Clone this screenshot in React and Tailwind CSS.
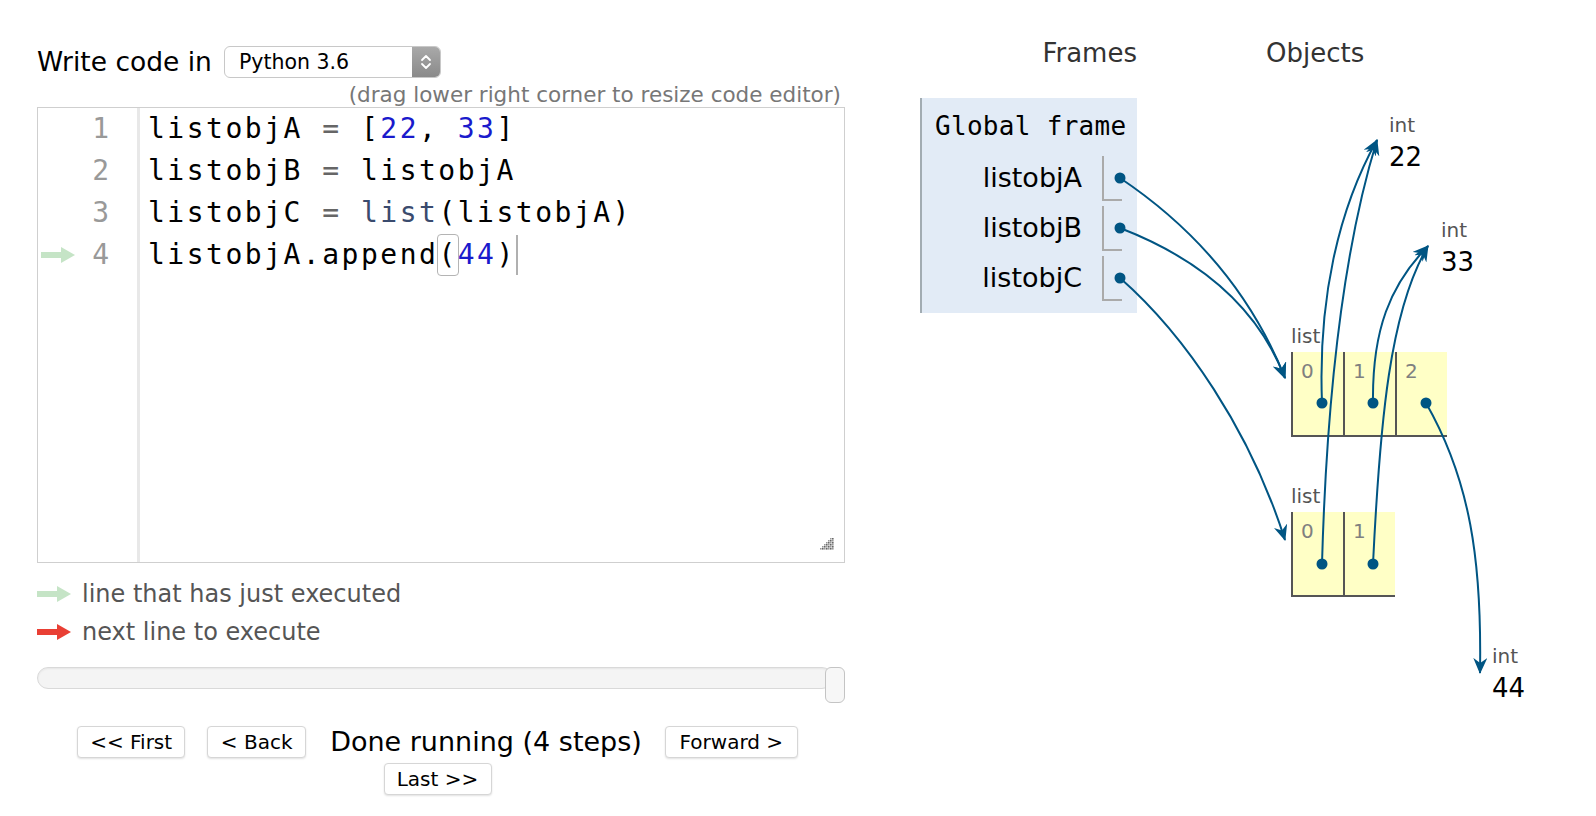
import React from 'react'

const BLUE = '#005583'

// connectors between frame vars / list cells and heap objects (page coords)
const links = [
  'M1120 178 C1190 225 1250 290 1285 378',
  'M1120 228 C1190 255 1255 300 1285 378',
  'M1120 278 C1185 335 1250 430 1285 540',
  'M1322 403 C1318 300 1338 210 1377 140',
  'M1322 564 C1326 420 1340 260 1377 140',
  'M1373 403 C1372 330 1390 285 1428 246',
  'M1373 564 C1380 420 1390 310 1428 246',
  'M1426 403 C1470 480 1482 560 1480 673',
]

const dots = [
  [1120, 178], [1120, 228], [1120, 278],
  [1322, 403], [1373, 403], [1426, 403],
  [1322, 564], [1373, 564],
]

function LineArrow({ color }) {
  return (
    <svg width="34" height="16" viewBox="0 0 34 16" className="shrink-0">
      <path d="M0 5h20V0l14 8-14 8v-5H0z" fill={color} />
    </svg>
  )
}

function Num({ children }) {
  return <span className="text-[#1a1acc]">{children}</span>
}

function Op({ children }) {
  return <span className="text-[#666]">{children}</span>
}

function Btn({ children, w }) {
  return (
    <div className={`${w} h-[32px] shrink-0 flex items-center justify-center bg-white border border-[#d6d6d6] rounded-[4px] shadow-[0_1px_2px_rgba(0,0,0,0.12)] text-[20px] text-black`}>
      {children}
    </div>
  )
}

function IntObj({ pos, value }) {
  return (
    <div className={`absolute ${pos}`}>
      <div className="text-[20px] leading-[20px] text-[#555]">int</div>
      <div className="mt-[9px] text-[26px] leading-[26px] text-black">{value}</div>
    </div>
  )
}

function ListObj({ pos, n }) {
  const cells = Array.from({ length: n }, (_, i) => i)
  return (
    <div className={`absolute ${pos}`}>
      <div className="text-[20px] leading-[20px] text-[#555]">list</div>
      <div className="mt-[6px] flex">
        {cells.map((i) => (
          <div
            key={i}
            className="w-[52px] h-[85px] bg-[#ffffc6] border-l-2 border-b-2 border-[#555] pl-[8px] pt-[9px] text-[20px] leading-[20px] text-[#808080]"
          >
            {i}
          </div>
        ))}
      </div>
    </div>
  )
}

export default function App() {
  const lineNums = [1, 2, 3, 4]
  return (
    <div className="relative w-[1596px] h-[816px] bg-white overflow-hidden font-['DejaVu_Sans',sans-serif]">
      <div className="flex">
        {/* code panel */}
        <div className="ml-[37px] w-[808px] shrink-0 pt-[46px]">
          <div className="flex items-center h-[32px]">
            <span className="text-[26.5px] leading-[32px] text-black">Write code in</span>
            <div className="ml-[12px] w-[217px] h-[32px] flex rounded-[6px] border border-[#c8c8c8] bg-white overflow-hidden">
              <div className="flex-1 pl-[14px] flex items-center text-[20.5px] text-black">Python 3.6</div>
              <div className="w-[28px] bg-gradient-to-b from-[#a9a9a9] to-[#8a8a8a] flex items-center justify-center">
                <svg width="12" height="20" viewBox="0 0 12 20">
                  <path d="M2 8l4-4 4 4M2 12l4 4 4-4" stroke="white" strokeWidth="1.8" fill="none" strokeLinecap="round" strokeLinejoin="round" />
                </svg>
              </div>
            </div>
          </div>
          <div className="mt-[5px] h-[24px] text-right pr-[4px] text-[21.5px] leading-[24px] text-[#777]">
            (drag lower right corner to resize code editor)
          </div>

          {/* editor */}
          <div className="relative h-[456px] border border-[#cfcfcf] flex bg-white">
            <div className="w-[102px] shrink-0 border-r-[3px] border-[#e8e8e8] font-['DejaVu_Sans_Mono',monospace] text-[28px] text-[#999]">
              {lineNums.map((n) => (
                <div key={n} className="h-[42px] flex items-center pl-[3px] pr-[28px]">
                  {n === 4 && <LineArrow color="#c5e4c6" />}
                  <span className="ml-auto leading-[42px]">{n}</span>
                </div>
              ))}
            </div>
            <div className="pl-[8px] font-['DejaVu_Sans_Mono',monospace] text-[28px] tracking-[2.5px] text-black whitespace-pre">
              <div className="h-[42px] leading-[42px]">listobjA <Op>=</Op> [<Num>22</Num>, <Num>33</Num>]</div>
              <div className="h-[42px] leading-[42px]">listobjB <Op>=</Op> listobjA</div>
              <div className="h-[42px] leading-[42px]">listobjC <Op>=</Op> <span className="text-[#3a4b6e]">list</span>(listobjA)</div>
              <div className="h-[42px] leading-[42px] flex items-center">
                <span>listobjA.append</span>
                <span className="inline-block h-[40px] leading-[40px] outline outline-1 outline-[#b4b4b4] rounded-[3px]">(</span>
                <Num>44</Num>
                <span>)</span>
                <span className="inline-block w-[2px] h-[40px] bg-[#b0b0b0]" />
              </div>
            </div>
            <svg width="14" height="14" viewBox="0 0 14 14" className="absolute right-[10px] bottom-[10px]">
              {[
                [10, 0], [12, 0], [8, 2], [10, 2], [12, 2], [6, 4], [8, 4], [10, 4], [12, 4],
                [4, 6], [6, 6], [8, 6], [10, 6], [12, 6], [2, 8], [4, 8], [6, 8], [8, 8], [10, 8], [12, 8],
                [0, 10], [2, 10], [4, 10], [6, 10], [8, 10], [10, 10], [12, 10],
              ].map(([x, y], i) => (
                <rect key={i} x={x} y={y} width="1.6" height="1.6" fill={(x + y) % 4 === 0 ? '#666' : '#999'} />
              ))}
            </svg>
          </div>

          {/* legend */}
          <div className="mt-[12px] h-[38px] flex items-center gap-[11px] text-[24px] text-[#555]">
            <LineArrow color="#c5e4c6" />
            <span>line that has just executed</span>
          </div>
          <div className="h-[38px] flex items-center gap-[11px] text-[24px] text-[#555]">
            <LineArrow color="#e93f34" />
            <span>next line to execute</span>
          </div>

          {/* step slider */}
          <div className="relative mt-[16px] h-[36px]">
            <div className="mt-[6px] h-[22px] w-[796px] rounded-full border border-[#d9d9d9] bg-[#f4f4f4] shadow-[inset_0_1px_2px_rgba(0,0,0,0.06)]" />
            <div className="absolute right-0 top-0 w-[20px] h-[36px] rounded-[6px] border border-[#c4c4c4] bg-[#f7f7f7]" />
          </div>

          {/* nav buttons */}
          <div className="mt-[23px] h-[32px] pr-[7px] flex items-center justify-center">
            <Btn w="w-[108px]">&lt;&lt; First</Btn>
            <div className="ml-[22px]"><Btn w="w-[99px]">&lt; Back</Btn></div>
            <span className="ml-[24px] text-[27px] leading-[32px] text-black">Done running (4 steps)</span>
            <div className="ml-[23px]"><Btn w="w-[133px]">Forward &gt;</Btn></div>
          </div>
          <div className="mt-[5px] pr-[7px] flex justify-center">
            <Btn w="w-[108px]">Last &gt;&gt;</Btn>
          </div>
        </div>

        {/* frames column */}
        <div className="ml-[75px] w-[217px] shrink-0 pt-[37px]">
          <div className="flex">
            <div className="w-[217px] shrink-0 text-right text-[26px] leading-[32px] text-[#333]">Frames</div>
            <div className="ml-[129px] shrink-0 text-[26px] leading-[32px] text-[#333]">Objects</div>
          </div>
          <div className="mt-[29px] h-[215px] bg-[#e2ebf6] border-l-2 border-[#a2acb2]">
            <div className="pl-[13px] pt-[12px] font-['DejaVu_Sans_Mono',monospace] text-[26px] leading-[32px] tracking-[0.3px] text-black">
              Global frame
            </div>
            <div className="mt-[11px]">
              {['listobjA', 'listobjB', 'listobjC'].map((name) => (
                <div key={name} className="h-[50px] flex">
                  <div className="w-[160px] text-right text-[27px] leading-[50px] text-black">{name}</div>
                  <div className="ml-[20px] mt-[3px] w-[20px] h-[45px] border-l-2 border-b-2 border-[#aaa]" />
                </div>
              ))}
            </div>
          </div>
        </div>
      </div>

      {/* heap objects */}
      <div className="absolute inset-0 pointer-events-none">
        <IntObj pos="left-[1389px] top-[115px]" value="22" />
        <IntObj pos="left-[1441px] top-[220px]" value="33" />
        <IntObj pos="left-[1492px] top-[646px]" value="44" />
        <ListObj pos="left-[1291px] top-[326px]" n={3} />
        <ListObj pos="left-[1291px] top-[486px]" n={2} />
      </div>

      {/* pointer arrows */}
      <svg className="absolute inset-0 pointer-events-none" width="1596" height="816" viewBox="0 0 1596 816">
        <defs>
          <marker id="ah" viewBox="0 0 16 14" refX="15" refY="7" markerWidth="16" markerHeight="14" markerUnits="userSpaceOnUse" orient="auto">
            <path d="M0 0 L16 7 L0 14 L5 7 Z" fill={BLUE} />
          </marker>
        </defs>
        {links.map((d, i) => (
          <path key={i} d={d} stroke={BLUE} strokeWidth="2" fill="none" markerEnd="url(#ah)" />
        ))}
        {dots.map(([x, y], i) => (
          <circle key={i} cx={x} cy={y} r="5.5" fill={BLUE} />
        ))}
      </svg>
    </div>
  )
}
